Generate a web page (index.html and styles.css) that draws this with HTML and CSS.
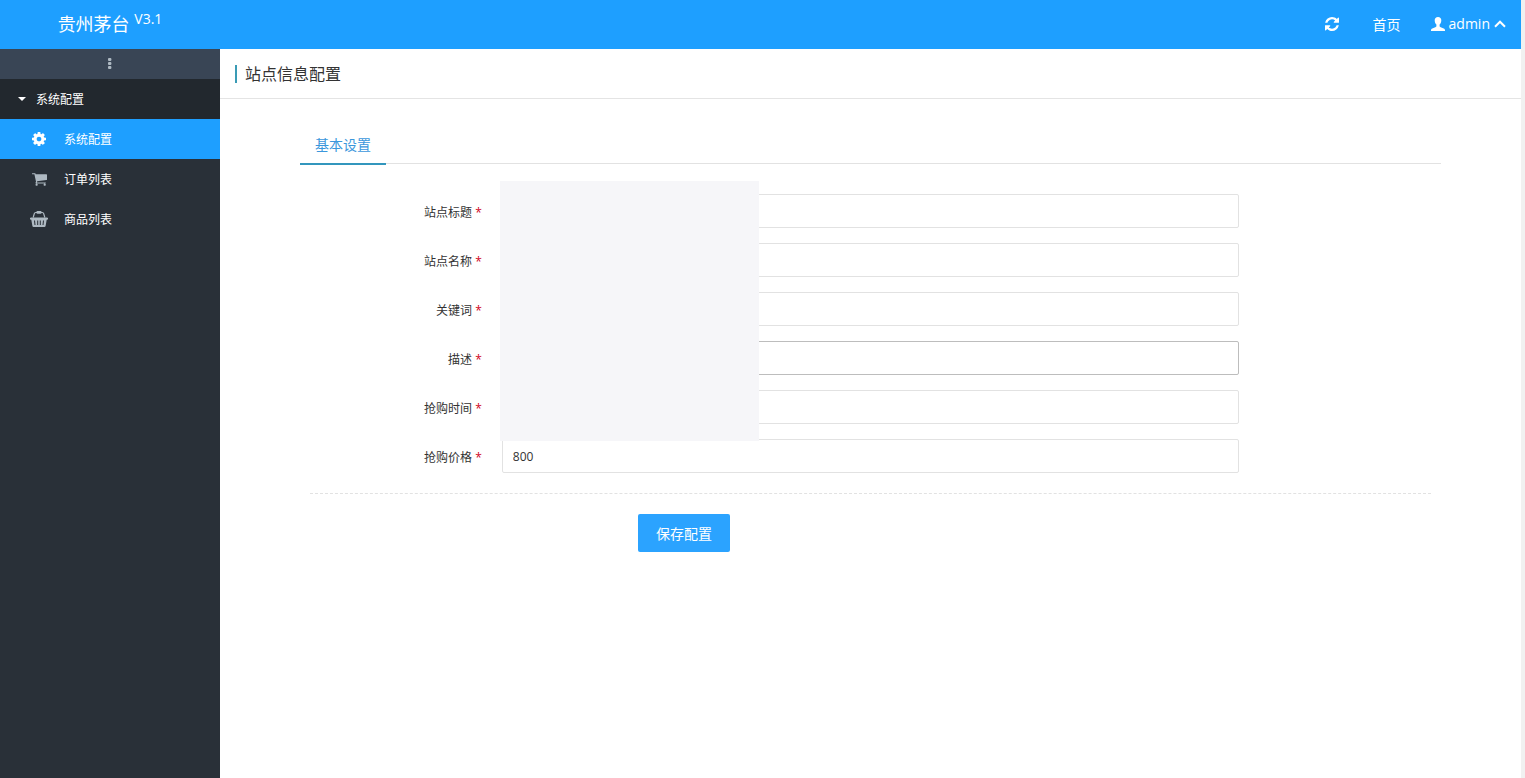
FILE: index.html
```html
<!DOCTYPE html>
<html lang="zh-CN">
<head>
<meta charset="utf-8">
<title>站点信息配置</title>
<link rel="stylesheet" href="styles.css">
</head>
<body>
<div class="app">
  <header class="topbar">
    <a class="brand" href="#">贵州茅台 <sup class="version">V3.1</sup></a>
    <nav class="topnav">
      <button class="topnav-item" type="button" aria-label="刷新">
        <svg class="icon-refresh" viewBox="0 0 1536 1536" fill="currentColor"><path d="M1511 928q0 5-1 7-64 268-268 434.500t-478 166.500q-146 0-282.500-55t-243.500-157l-129 129q-19 19-45 19t-45-19-19-45v-448q0-26 19-45t45-19h448q26 0 45 19t19 45-19 45l-137 137q71 66 161 102t187 36q134 0 250-65t186-179q11-17 53-117 8-23 30-23h192q13 0 22.500 9.500t9.500 22.500zm25-800v448q0 26-19 45t-45 19h-448q-26 0-45-19t-19-45 19-45l138-138q-148-137-349-137-134 0-250 65t-186 179q-11 17-53 117-8 23-30 23h-199q-13 0-22.500-9.500t-9.500-22.500v-7q65-268 270-434.500t480-166.500q146 0 284 55.500t245 156.500l130-129q19-19 45-19t45 19 19 45z"/></svg>
      </button>
      <a class="topnav-item" href="#">首页</a>
      <button class="topnav-item user" type="button">
        <svg class="icon-user" viewBox="0 0 14 14" fill="currentColor"><path d="M7 0C4.900 0 3.700 1.300 3.700 3.300c0 1.800.6 3.300 1.700 4.300v1.500c0 .6-.5.900-1.100 1.200L1.300 11.500C.4 11.900 0 12.400 0 13.200V14h14v-.8c0-.8-.4-1.300-1.300-1.700l-3-1.200C9.100 10 8.600 9.700 8.600 9.100V7.600c1.100-1 1.700-2.500 1.700-4.300C10.300 1.300 9.100 0 7 0z"/></svg>
        <span>admin</span>
        <svg class="icon-chevron" viewBox="0 0 12 8" fill="none" stroke="currentColor" stroke-width="2"><path d="M1 6.700 6 1.700l5 5"/></svg>
      </button>
    </nav>
  </header>

  <div class="body">
    <aside class="sidebar">
      <button class="collapse" type="button" aria-label="折叠菜单">
        <svg class="icon-dots" viewBox="0 0 4 12" fill="currentColor"><rect width="3.400" height="3" rx="1"/><rect y="4" width="3.400" height="3" rx="1"/><rect y="8" width="3.400" height="3" rx="1"/></svg>
      </button>
      <button class="group" type="button">
        <svg class="icon-caret" viewBox="0 0 8 4" fill="currentColor"><path d="M0 0h8L4 4z"/></svg>
        <span>系统配置</span>
      </button>
      <nav class="menu">
        <a class="menu-item active" href="#">
          <span class="menu-icon"><svg class="icon-cog" viewBox="0 0 1536 1536" fill="currentColor"><path d="M1024 768q0-106-75-181t-181-75-181 75-75 181 75 181 181 75 181-75 75-181zm512-109v222q0 12-8 23t-20 13l-185 28q-19 54-39 91 35 50 107 138 10 12 10 25t-9 23q-27 37-99 108t-94 71q-12 0-26-9l-138-108q-44 23-91 38-16 136-29 186-7 28-36 28h-222q-14 0-24.500-8.500t-11.500-21.500l-28-184q-49-16-90-37l-141 107q-10 9-25 9-14 0-25-11-126-114-165-168-7-10-7-23 0-12 8-23 15-21 51-66.500t54-70.500q-27-50-41-99l-183-27q-13-2-21-12.500t-8-23.500v-222q0-12 8-23t19-13l186-28q14-46 39-92-40-57-107-138-10-12-10-24 0-10 9-23 26-36 98.500-107.500t94.500-71.500q13 0 26 10l138 107q44-23 91-38 16-136 29-186 7-28 36-28h222q14 0 24.500 8.500t11.500 21.500l28 184q49 16 90 37l142-107q9-9 24-9 13 0 25 10 129 119 165 170 7 8 7 22 0 12-8 23-15 21-51 66.500t-54 70.500q26 50 41 98l183 28q13 2 21 12.500t8 23.500z"/></svg></span>
          <span>系统配置</span>
        </a>
        <a class="menu-item" href="#">
          <span class="menu-icon"><svg class="icon-cart" viewBox="0 128 1664 1408" fill="currentColor"><path d="M640 1408q0 52-38 90t-90 38-90-38-38-90 38-90 90-38 90 38 38 90zm896 0q0 52-38 90t-90 38-90-38-38-90 38-90 90-38 90 38 38 90zm128-1088v512q0 24-16.500 42.500t-40.500 21.500l-1044 122q13 60 13 70 0 16-24 64h920q26 0 45 19t19 45-19 45-45 19h-1024q-26 0-45-19t-19-45q0-11 8-31.500t16-36 21.500-40 15.500-29.500l-177-823h-204q-26 0-45-19t-19-45 19-45 45-19h256q16 0 28.500 6.500t19.500 15.500 13 24.500 8 26 5.500 29.500 4.500 26h1201q26 0 45 19t19 45z"/></svg></span>
          <span>订单列表</span>
        </a>
        <a class="menu-item" href="#">
          <span class="menu-icon"><svg class="icon-basket" viewBox="0 0 18 16" fill="currentColor"><path fill-rule="evenodd" d="M1 6.500h16a1 1 0 0 1 0 2.300h-.3L15.600 15q-.2 1-1.200 1H3.600q-1 0-1.200-1L1.300 8.800H1a1 1 0 0 1 0-2.300zM4 9.500l.5 4.500h1L5 9.500zM7.200 9.500V14h1V9.500zM9.800 9.500V14h1V9.500zM13 9.500l-.5 4.500h1l.5-4.500z"/><path d="M3.200 6.500 4.300 2.600q.3-1.100 1.400-1.100h6.600q1.100 0 1.400 1.100l1.100 3.900" fill="none" stroke="currentColor" stroke-width="1.200"/><rect x="6.500" y="0" width="5" height="2.800" rx=".8"/></svg></span>
          <span>商品列表</span>
        </a>
      </nav>
    </aside>

    <main class="content">
      <div class="page-head"><h1 class="page-title">站点信息配置</h1></div>
      <section class="panel">
        <div class="tabs"><a class="tab" href="#">基本设置</a></div>
        <form class="form">
          <div class="row"><label class="label" for="title">站点标题 <span class="req">*</span></label><input class="field" id="title" type="text"></div>
          <div class="row"><label class="label" for="name">站点名称 <span class="req">*</span></label><input class="field" id="name" type="text"></div>
          <div class="row"><label class="label" for="keywords">关键词 <span class="req">*</span></label><input class="field" id="keywords" type="text"></div>
          <div class="row"><label class="label" for="desc">描述 <span class="req">*</span></label><input class="field hovered" id="desc" type="text"></div>
          <div class="row"><label class="label" for="time">抢购时间 <span class="req">*</span></label><input class="field" id="time" type="text"></div>
          <div class="row"><label class="label" for="price">抢购价格 <span class="req">*</span></label><input class="field" id="price" type="text" value="800"></div>
          <div class="mask"></div>
          <div class="actions"><button class="save" type="button">保存配置</button></div>
        </form>
      </section>
    </main>
  </div>
</div>
</body>
</html>
```
FILE: styles.css
```css
* { box-sizing: border-box; }

body {
  margin: 0;
  background: #f1f1f1;
  color: #333;
  font-family: "Open Sans", "Noto Sans CJK SC", sans-serif;
  font-size: 12px;
}

a { color: inherit; text-decoration: none; }

button {
  margin: 0;
  padding: 0;
  border: 0;
  background: none;
  color: inherit;
  font: inherit;
}

svg { display: block; flex: none; }

.app {
  display: flex;
  flex-direction: column;
  min-height: 100vh;
  margin-right: 4px;
  background: #fff;
}

.topbar {
  display: flex;
  justify-content: space-between;
  height: 49px;
  background: #1e9fff;
  color: #fff;
}

.brand {
  width: 220px;
  text-align: center;
  font-size: 18px;
  line-height: 48px;
}

.version {
  font-size: 14px;
  line-height: 0;
}

.topnav {
  display: flex;
  padding-bottom: 2px;
  font-size: 14px;
}

.topnav-item {
  display: flex;
  align-items: center;
  padding: 0 15px;
}

.topnav-item.user { gap: 4px; }

.icon-refresh { width: 14px; height: 14px; margin-right: 4px; }
.icon-user { width: 14px; height: 14px; }
.icon-chevron { width: 12px; height: 8px; }

.body { display: flex; flex: 1; }

.sidebar {
  flex: none;
  width: 220px;
  background: #293038;
  color: #fff;
}

.collapse {
  display: flex;
  align-items: center;
  justify-content: center;
  width: 100%;
  height: 30px;
  background: #394555;
  color: #aeb9c2;
}

.icon-dots { width: 4px; height: 12px; }

.group {
  display: flex;
  align-items: center;
  gap: 10px;
  width: 100%;
  height: 40px;
  padding-left: 18px;
  background: #22282e;
}

.icon-caret { width: 8px; height: 4px; }

.menu-item {
  display: flex;
  align-items: center;
  gap: 14px;
  height: 40px;
  padding-left: 28px;
}

.menu-item.active { background: #1e9fff; }

.menu-icon {
  display: flex;
  justify-content: center;
  width: 22px;
  color: #aeb9c2;
}

.active .menu-icon { color: #fff; }

.icon-cog { width: 14px; height: 14px; }
.icon-cart { width: 15px; height: 13px; }
.icon-basket { width: 18px; height: 16px; }

.content { flex: 1; min-width: 0; }

.page-head {
  display: flex;
  align-items: center;
  height: 50px;
  padding-left: 15px;
  border-bottom: 1px solid #e4e4e4;
}

.page-title {
  margin: 0;
  padding-left: 8px;
  border-left: 2px solid #3a9bb5;
  font-size: 16px;
  font-weight: 400;
  line-height: 18px;
}

.panel { margin: 28px 80px 0; }

.tabs {
  display: flex;
  border-bottom: 1px solid #e2e2e2;
}

.tab {
  height: 38px;
  margin-bottom: -2px;
  padding: 0 15px;
  border-bottom: 2px solid #3296bd;
  color: #3b97dc;
  font-size: 14px;
  line-height: 36px;
}

.form {
  position: relative;
  padding: 30px 10px 0;
}

.row {
  display: grid;
  grid-template-columns: 2fr 8fr 2fr;
  margin-bottom: 15px;
}

.label {
  padding-top: 4px;
  padding-right: 15px;
  line-height: 30px;
  text-align: right;
}

.req { color: #d0021b; }

.field {
  min-width: 0;
  height: 34px;
  margin: 0 5px;
  padding: 0 10px;
  border: 1px solid #e2e2e2;
  border-radius: 2px;
  background: #fff;
  color: #333;
  font: inherit;
}

.field.hovered { border-color: #bdbdbd; }

.mask {
  position: absolute;
  top: 17px;
  left: 200px;
  width: 259px;
  height: 260px;
  background: #f6f6f9;
}

.actions {
  margin-top: 20px;
  padding: 20px 0 0 328px;
  border-top: 1px dashed #e2e2e2;
}

.save {
  width: 92px;
  height: 38px;
  border-radius: 2px;
  background: #2ba3ff;
  color: #fff;
  font-size: 14px;
}
```
